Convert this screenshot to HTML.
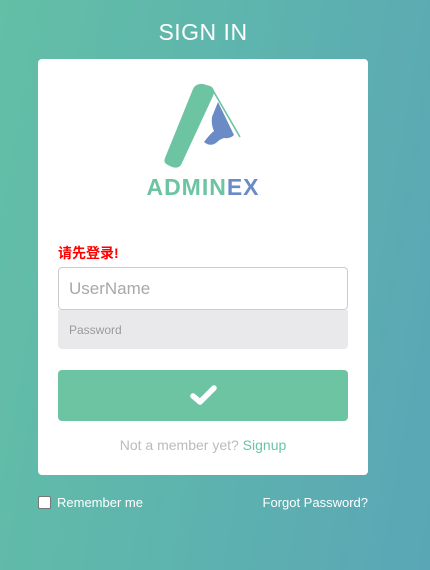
<!DOCTYPE html>
<html><head><meta charset="utf-8"><style>
html,body{margin:0;padding:0}
body{width:430px;height:570px;overflow:hidden;position:relative;font-family:"Liberation Sans","Noto Sans CJK SC",sans-serif;background:linear-gradient(100deg,#63bfa6 0%,#5eb5ad 45%,#5aa6b6 100%)}
.title{position:absolute;top:19px;left:0;width:406px;text-align:center;color:#fff;font-size:23px;letter-spacing:0.5px}
.card{position:absolute;left:38px;top:59px;width:330px;height:416px;background:#fff;border-radius:4px}
.logo{position:absolute;left:0;top:0}
.brand{position:absolute;left:0;width:330px;top:115px;text-align:center;font-weight:bold;font-size:23px;letter-spacing:1px;color:#6cc4a2}
.brand span{color:#6a8bc6}
.err{position:absolute;left:20px;top:184px;color:#f00;font-size:14px;font-weight:bold}
.u{position:absolute;left:20px;top:208px;width:290px;height:43px;border:1px solid #ccc;border-radius:4px;box-sizing:border-box;color:#a8a8a8;font-size:17px;padding:11px 10px}
.p{position:absolute;left:20px;top:251px;width:290px;height:39px;background:#e9e9eb;border-radius:0 0 4px 4px;color:#9a9a9a;font-size:12px;padding:13px 11px;box-sizing:border-box}
.btn{position:absolute;left:20px;top:311px;width:290px;height:51px;background:#6cc4a2;border-radius:4px}
.sign{position:absolute;left:0;width:330px;top:378px;text-align:center;font-size:14px;color:#bbb}
.sign span{color:#6cc4a2}
.rem{position:absolute;left:38px;top:495px;color:#fff;font-size:13px}
.rem i{display:inline-block;width:11px;height:11px;background:#fff;border:1px solid #777;border-radius:2px;vertical-align:-2px;margin-right:6px}
.fp{position:absolute;right:62px;top:495px;color:#fff;font-size:13px}
</style></head><body>
<div class="title">SIGN IN</div>
<div class="card">
<svg class="logo" width="330" height="130">
<path d="M127 99 L155 30 Q158 24 165 25 L172 27 Q178 30 175 37 L143 106 Q140 110 134 108 L130 106 Q125 104 127 99 Z" fill="#6cc4a2"/>
<path d="M173 28 L202 78" stroke="#6cc4a2" stroke-width="1.6" fill="none"/>
<path d="M180 43 L196 76 Q192 80 186 79 Q182 80 178 84 Q172 88 166 83 Q172 75 176 72 Q173 66 174 58 Z" fill="#6a8bc6"/>
</svg>
<div class="brand">ADMIN<span>EX</span></div>
<div class="err">请先登录!</div>
<div class="u">UserName</div>
<div class="p">Password</div>
<div class="btn"><svg width="290" height="51"><path d="M135 26 L142 32 L156 18" stroke="#fff" stroke-width="5.5" fill="none" stroke-linecap="round" stroke-linejoin="round"/></svg></div>
<div class="sign">Not a member yet? <span>Signup</span></div>
</div>
<div class="rem"><i></i>Remember me</div>
<div class="fp">Forgot Password?</div>
</body></html>
